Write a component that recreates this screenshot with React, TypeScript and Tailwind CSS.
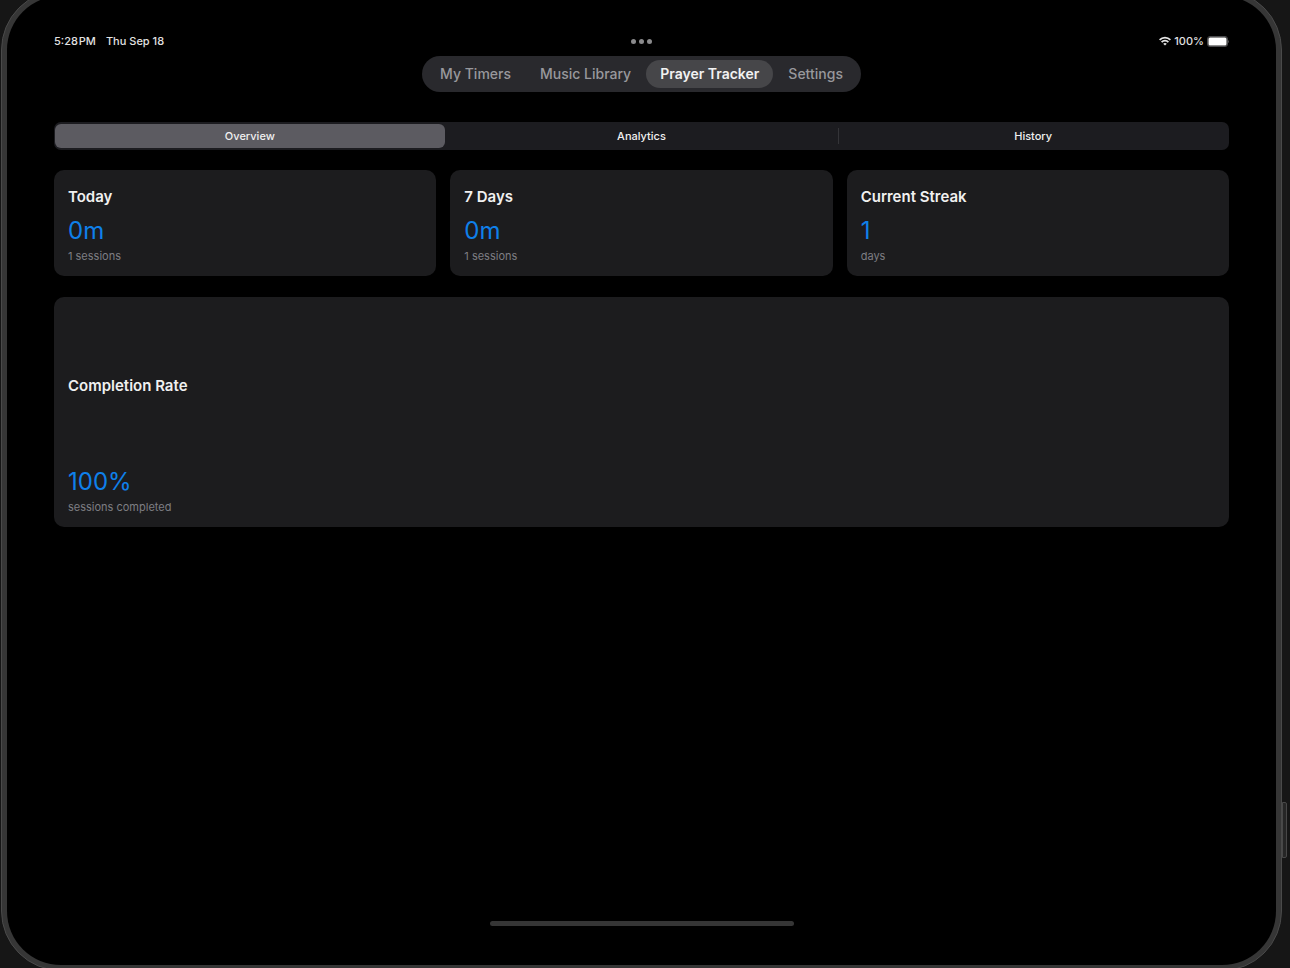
import { useState } from "react";
import clsx from "clsx";

const tabs = ["My Timers", "Music Library", "Prayer Tracker", "Settings"];
const views = ["Overview", "Analytics", "History"];

const stats = [
  { title: "Today", value: "0m", note: "1 sessions" },
  { title: "7 Days", value: "0m", note: "1 sessions" },
  { title: "Current Streak", value: "1", note: "days" },
];

function WifiIcon() {
  return (
    <svg width="12" height="10" viewBox="0 0 12 10" fill="none" stroke="#e6e6e6" strokeWidth="1.7" aria-hidden="true">
      <path d="M0.6 3.9a7.6 7.6 0 0 1 10.8 0" />
      <path d="M2.6 6.1a4.8 4.8 0 0 1 6.8 0" />
      <path d="M6 9.6 4.2 7.8a2.6 2.6 0 0 1 3.6 0Z" fill="#e6e6e6" stroke="none" />
    </svg>
  );
}

function BatteryIcon() {
  return (
    <svg width="22" height="11" viewBox="0 0 22 11" aria-hidden="true">
      <rect x="0.5" y="0.5" width="20" height="10" rx="2.5" fill="#1c1c1c" stroke="#4c4c4e" />
      <rect x="1.5" y="1.5" width="18" height="8" rx="1.5" fill="#fff" />
      <path d="M21.2 3.9c1 .5 1 2.7 0 3.2Z" fill="#6a6a6c" />
    </svg>
  );
}

function StatusBar() {
  return (
    <div className="grid grid-cols-3 items-center h-5 text-[11px] font-medium text-[#e2e2e2]">
      <div className="flex gap-2.5">
        <span>5:28{"\u200A"}PM</span>
        <span>Thu Sep 18</span>
      </div>
      <div className="flex justify-center gap-[3px]">
        <span className="size-[5px] rounded-full bg-[#8a8a8c]" />
        <span className="size-[5px] rounded-full bg-[#8a8a8c]" />
        <span className="size-[5px] rounded-full bg-[#8a8a8c]" />
      </div>
      <div className="flex justify-end items-center gap-[3px]">
        <WifiIcon />
        <span>100%</span>
        <BatteryIcon />
      </div>
    </div>
  );
}

function StatCard({ title, value, note, className }: { title: string; value: string; note: string; className?: string }) {
  return (
    <section className={clsx("flex flex-col rounded-[10px] bg-[#1c1c1e] px-3.5 pt-3.5 pb-3", className)}>
      <h2 className="flex flex-1 items-center text-[15px] leading-[26px] font-semibold text-[#f0f0f0]">{title}</h2>
      <p className="mt-1.5 text-2xl leading-[30px] text-[#0f80ea]">{value}</p>
      <p className="mt-0.5 text-[11px] leading-4 text-[#7e7e83]">{note}</p>
    </section>
  );
}

export default function App() {
  const [tab, setTab] = useState("Prayer Tracker");
  const [view, setView] = useState("Overview");

  return (
    <div className="flex min-h-screen overflow-hidden bg-[#161616] font-[Inter,sans-serif]">
      {/* Device body */}
      <div className="relative flex flex-1 -mt-2.5 -mb-[3px] ml-px mr-2 rounded-[60px] border border-[#4a4a4a] bg-[#363636] p-[5px]">
        <div className="absolute -right-1.5 bottom-28 h-14 w-[5px] rounded-r-xs border border-[#484848] bg-[#262626]" />

        {/* Screen */}
        <div className="flex flex-1 flex-col rounded-[54px] bg-black px-[47px] pt-[35px] pb-[39px]">
          <StatusBar />

          <nav className="mt-[5px] mx-auto flex gap-px rounded-full bg-[#29292d] p-1">
            {tabs.map((name) => (
              <button
                key={name}
                onClick={() => setTab(name)}
                className={clsx(
                  "rounded-full px-3.5 text-sm leading-7",
                  tab === name ? "bg-[#464649] font-semibold text-[#f2f2f2]" : "font-medium text-[#98989c]"
                )}
              >
                {name}
              </button>
            ))}
          </nav>

          <div role="tablist" className="mt-[30px] grid grid-cols-3 rounded-[7px] bg-[#1c1c20] py-0.5">
            {views.map((name) => (
              <button
                key={name}
                role="tab"
                aria-selected={view === name}
                onClick={() => setView(name)}
                className={clsx(
                  "relative mx-px rounded-md text-[11px] leading-6 font-medium text-[#f0f0f0]",
                  view === name && "bg-[#5c5b61]",
                  name === "History" && view === "Overview" &&
                    "before:absolute before:left-0 before:top-1 before:h-4 before:w-px before:bg-[#343438]"
                )}
              >
                {name}
              </button>
            ))}
          </div>

          <div className="mt-5 grid grid-cols-3 gap-3.5">
            {stats.map((stat) => (
              <StatCard key={stat.title} {...stat} />
            ))}
          </div>

          <StatCard title="Completion Rate" value="100%" note="sessions completed" className="mt-[21px] min-h-[230px]" />

          {/* Home indicator */}
          <div className="mt-auto mx-auto h-[5px] w-[304px] rounded-full bg-[#353535]" />
        </div>
      </div>
    </div>
  );
}
